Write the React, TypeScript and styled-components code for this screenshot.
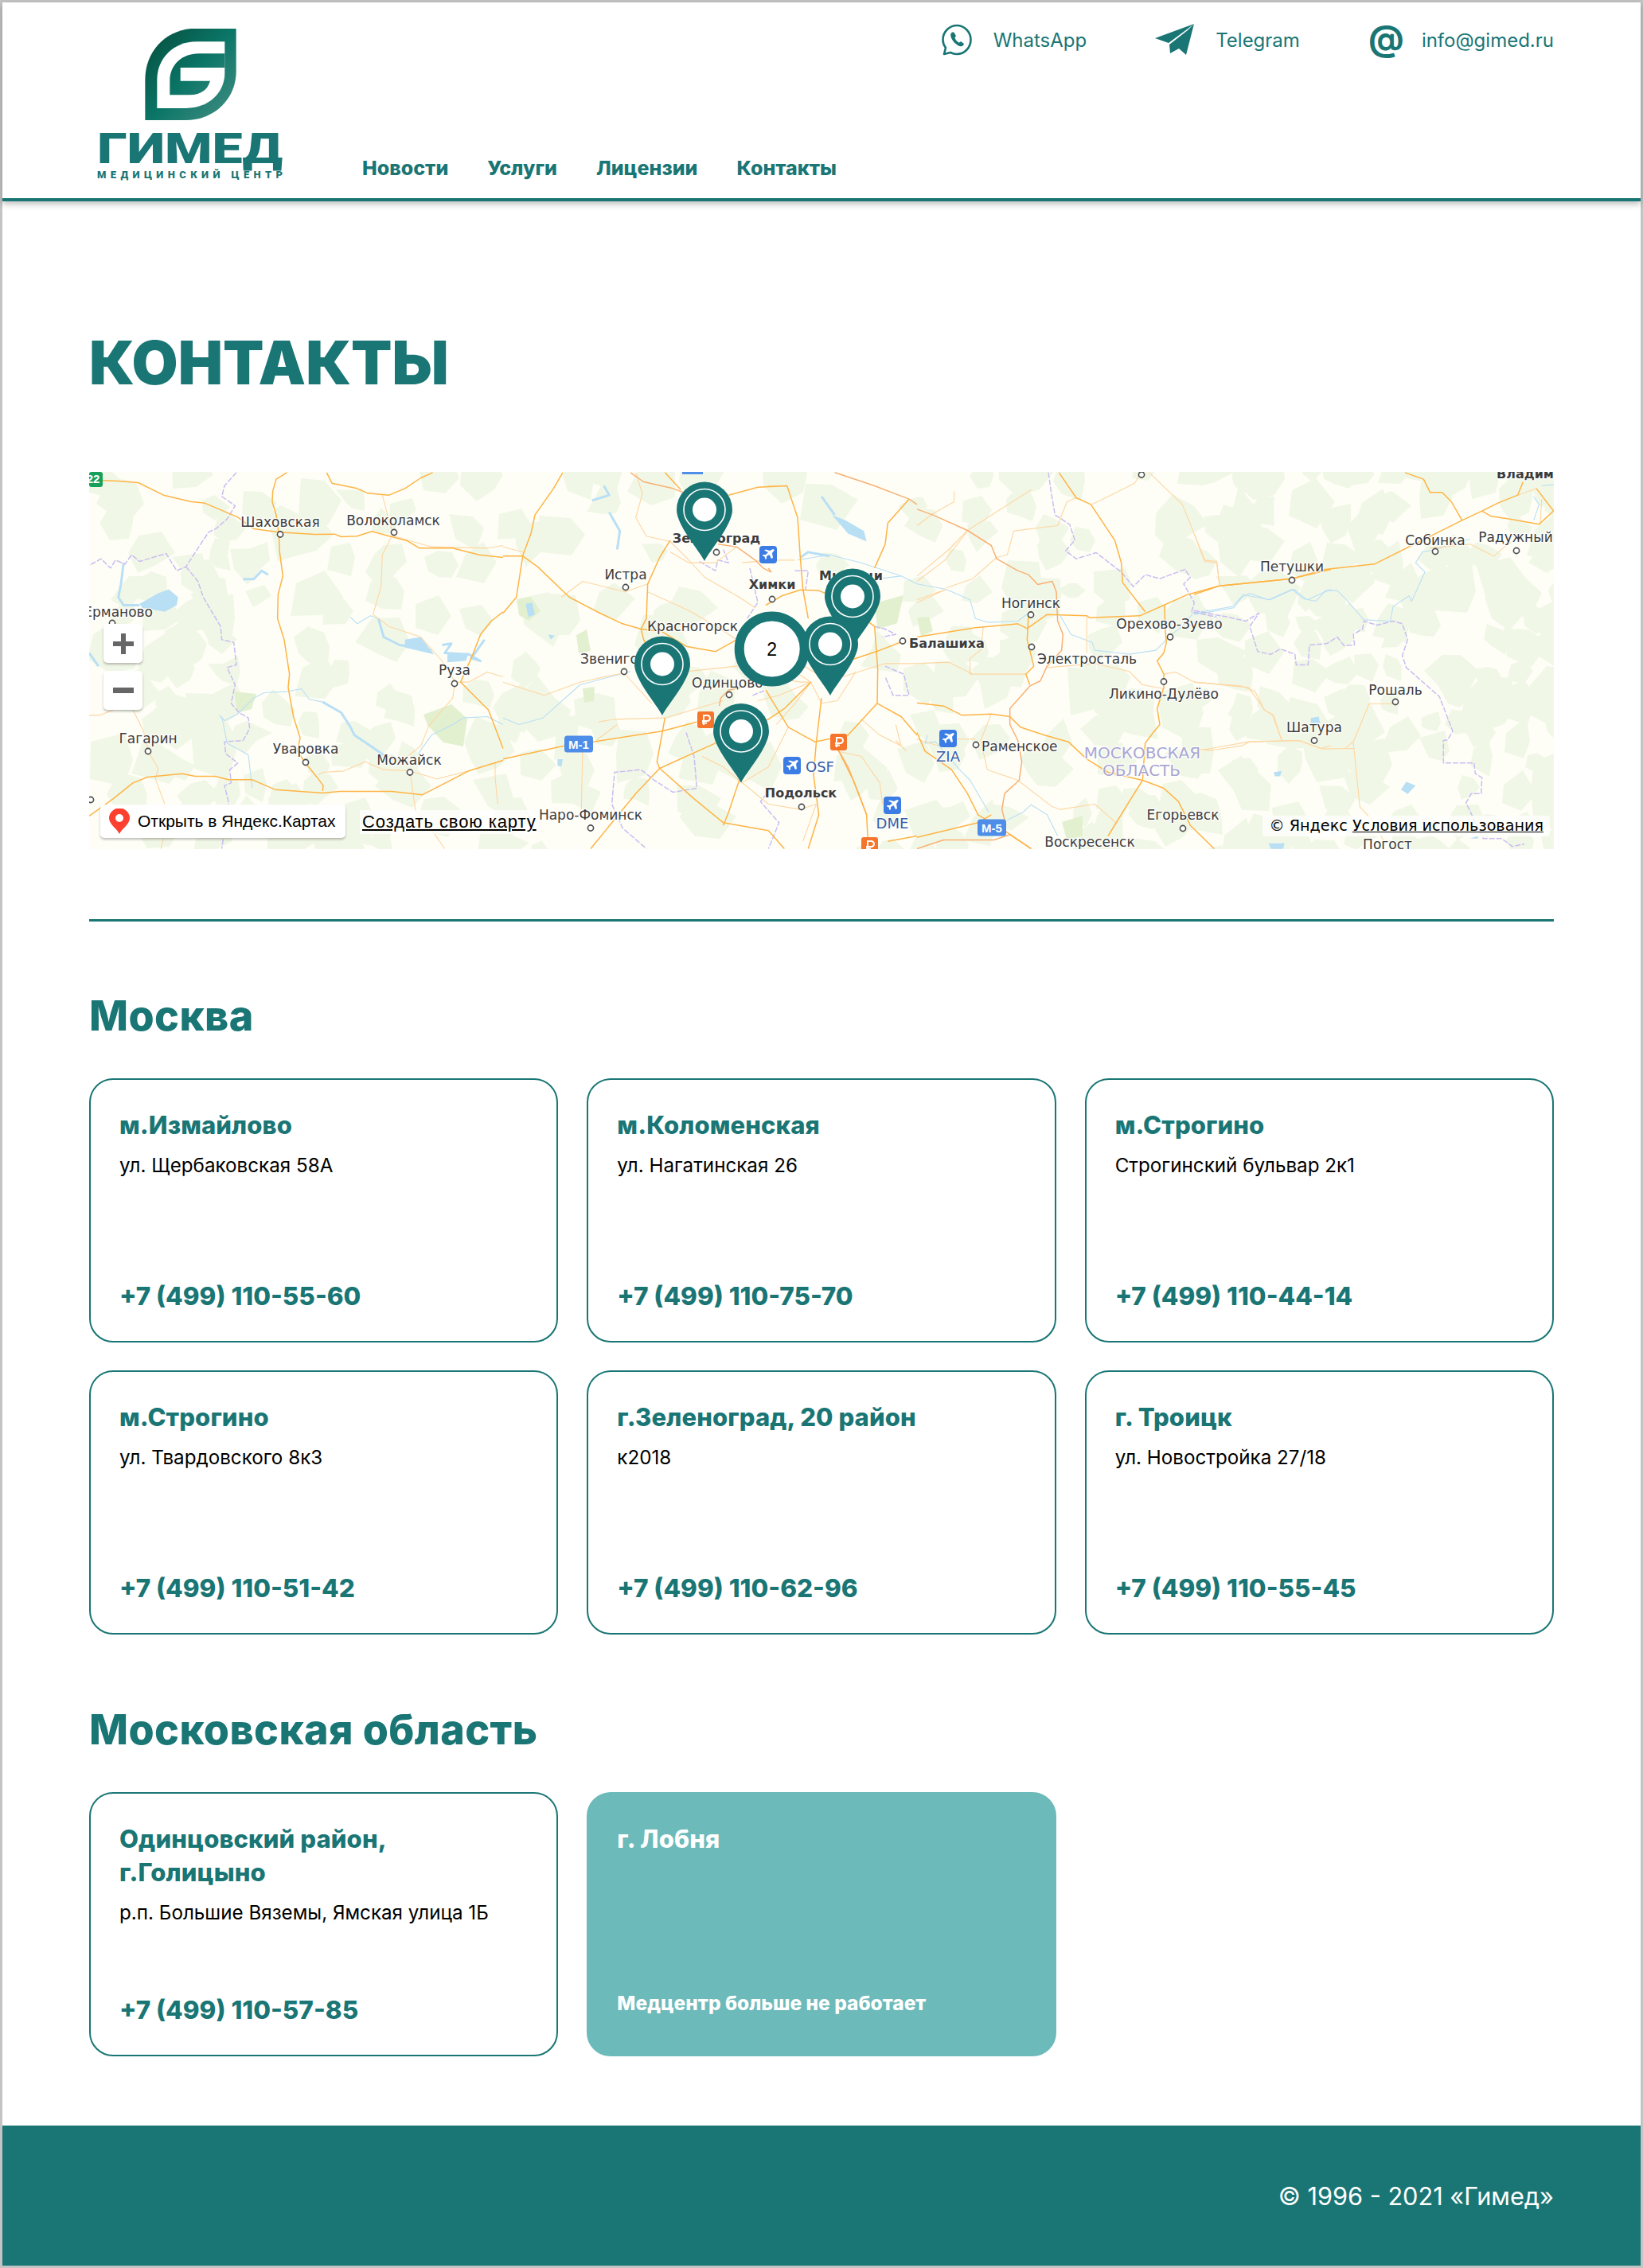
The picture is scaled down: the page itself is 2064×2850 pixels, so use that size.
import React from 'react';
import styled, { createGlobalStyle } from 'styled-components';

const TEAL = '#197675';

const GlobalStyle = createGlobalStyle`
  html, body { margin: 0; padding: 0; background: #fff; }
  * { box-sizing: border-box; }
  body { font-family: Inter, "Liberation Sans", sans-serif; color: #000; }
`;

const Page = styled.div`
  height: 2850px;
  border: 3px solid #c4c4c4;
  display: flex;
  flex-direction: column;
  background: #fff;
`;

const Header = styled.header`
  height: 250px;
  flex: none;
  border-bottom: 4px solid ${TEAL};
  box-shadow: 0 3px 8px rgba(0, 0, 0, 0.28);
  padding: 33px 109px 0 119px;
  display: flex;
  align-items: flex-start;
  position: relative;
`;

const LogoBox = styled.a`
  display: block;
  width: 234px;
  height: 192px;
  flex: none;
`;

const Nav = styled.nav`
  display: flex;
  gap: 49px;
  margin: 158px 0 0 99px;
`;

const NavLink = styled.a`
  font-size: 25px;
  line-height: 34px;
  font-weight: 800;
  color: ${TEAL};
  white-space: nowrap;
`;

const Contacts = styled.div`
  margin-left: auto;
  margin-top: -6px;
  display: flex;
  gap: 86px;
  height: 40px;
`;

const ContactItem = styled.a`
  display: flex;
  align-items: center;
  gap: 27px;
  font-size: 24px;
  color: ${TEAL};
  white-space: nowrap;
`;

const AtSign = styled.span`
  font-size: 44px;
  line-height: 40px;
  font-weight: 700;
  width: 40px;
  text-align: center;
  margin-top: -5px;
`;

const Main = styled.main`
  flex: 1;
  padding: 0 109px;
  display: flex;
  flex-direction: column;
`;

const Title = styled.h1`
  margin: 158px 0 0;
  font-size: 75px;
  line-height: 90px;
  font-weight: 900;
  color: ${TEAL};
`;

const MapFrame = styled.div`
  position: relative;
  height: 474px;
  margin-top: 92px;
  overflow: hidden;
  background: #fefef7;
`;

const MapSvg = styled.svg`
  display: block;
  width: 100%;
  height: 100%;
`;

const ZoomButton = styled.button<{ $top: number }>`
  position: absolute;
  left: 18px;
  top: ${p => p.$top}px;
  width: 49px;
  height: 49px;
  padding: 0;
  border: 0;
  border-radius: 5px;
  background: #fff;
  box-shadow: 0 2px 3px rgba(0, 0, 0, 0.25);
  display: flex;
  align-items: center;
  justify-content: center;
`;

const OpenButton = styled.a`
  position: absolute;
  left: 14px;
  top: 418px;
  width: 308px;
  height: 42px;
  border-radius: 5px;
  background: #fff;
  box-shadow: 0 2px 3px rgba(0, 0, 0, 0.25);
  display: flex;
  align-items: center;
  gap: 10px;
  padding-left: 11px;
  font-family: "Liberation Sans", sans-serif;
  font-size: 21px;
  color: #000;
  white-space: nowrap;
`;

const CreateLink = styled.a`
  position: absolute;
  left: 340px;
  top: 425px;
  height: 30px;
  padding: 0 3px;
  background: rgba(255, 255, 255, 0.75);
  font-family: "Liberation Sans", sans-serif;
  font-size: 22px;
  line-height: 30px;
  letter-spacing: 0.9px;
  color: #000;
  text-decoration: underline;
  white-space: nowrap;
`;

const Copyright = styled.div`
  position: absolute;
  right: 5px;
  top: 432px;
  height: 26px;
  padding: 0 8px;
  border-radius: 4px;
  background: rgba(255, 255, 255, 0.75);
  font-family: "DejaVu Sans", sans-serif;
  font-size: 19.2px;
  line-height: 26px;
  color: #000;
  white-space: nowrap;

  span {
    text-decoration: underline;
  }
`;

const Divider = styled.hr`
  margin: 88px 0 0;
  border: 0;
  border-top: 3px solid ${TEAL};
`;

const RegionTitle = styled.h2<{ $top: number }>`
  margin: ${p => p.$top}px 0 0;
  font-size: 52px;
  line-height: 60px;
  font-weight: 800;
  letter-spacing: 0.4px;
  color: ${TEAL};
`;

const CardGrid = styled.div`
  margin-top: 48px;
  display: grid;
  grid-template-columns: repeat(3, 1fr);
  grid-auto-rows: 332px;
  column-gap: 36px;
  row-gap: 35px;
`;

const Card = styled.article<{ $closed?: boolean }>`
  border-radius: 30px;
  border: 2px solid ${p => (p.$closed ? '#6cbaba' : TEAL)};
  background: ${p => (p.$closed ? '#6cbaba' : '#fff')};
  padding: 36px 36px 34px;
  display: flex;
  flex-direction: column;
`;

const CardTitle = styled.h3<{ $closed?: boolean }>`
  margin: 0;
  font-size: 31px;
  line-height: 42px;
  font-weight: 800;
  letter-spacing: 0.1px;
  color: ${p => (p.$closed ? '#fff' : TEAL)};
`;

const Address = styled.p`
  margin: 13px 0 0;
  font-size: 24.2px;
  line-height: 34px;
  color: #000;
`;

const Phone = styled.a`
  margin-top: auto;
  font-size: 31.5px;
  line-height: 44px;
  font-weight: 800;
  color: ${TEAL};
`;

const ClosedNote = styled.p`
  margin: auto 0 0;
  padding-bottom: 14px;
  font-size: 24.5px;
  line-height: 34px;
  font-weight: 800;
  color: #fff;
`;

const Footer = styled.footer`
  height: 176px;
  flex: none;
  background: #197675;
  padding: 0 109px;
  display: flex;
  align-items: center;
  justify-content: flex-end;
  font-size: 30.7px;
  color: #fff;
`;

// map drawing parts
const Road = styled.polyline<{ $kind: 'main' | 'minor' | 'salmon' }>`
  fill: none;
  stroke: ${p => (p.$kind === 'main' ? '#feb445' : p.$kind === 'salmon' ? '#f9b073' : '#fed6a2')};
  stroke-width: ${p => (p.$kind === 'minor' ? 1.1 : 1.5)};
  stroke-linejoin: round;
  vector-effect: non-scaling-stroke;
`;

const River = styled.polyline<{ $thick?: boolean }>`
  fill: none;
  stroke: #b9dff5;
  stroke-width: ${p => (p.$thick ? 3 : 1.1)};
  stroke-linejoin: round;
  vector-effect: non-scaling-stroke;
`;

const Lake = styled.polygon`
  fill: #b9dff5;
`;

const Border = styled.polyline`
  fill: none;
  stroke: #c9bdf2;
  stroke-width: 1.5;
  stroke-dasharray: 7 2;
  stroke-linejoin: round;
  vector-effect: non-scaling-stroke;
`;

const Place = styled.text<{ $bold?: boolean; $tone?: string; $size?: number }>`
  font-family: "DejaVu Sans", sans-serif;
  font-size: ${p => p.$size ?? (p.$bold ? 16 : 17)}px;
  font-weight: ${p => (p.$bold ? 700 : 400)};
  fill: ${p => p.$tone ?? '#3c3c3c'};
  stroke: rgba(255, 255, 255, 0.85);
  stroke-width: 2.5px;
  paint-order: stroke;
`;

const Dot = styled.circle`
  fill: #fff;
  stroke: #4c4c4c;
  stroke-width: 1.6;
`;

const SignText = styled.text`
  font-family: "Liberation Sans", sans-serif;
  font-size: 15px;
  font-weight: 700;
  fill: #fff;
  text-anchor: middle;
`;

const ClusterLabel = styled.text`
  font-family: "Liberation Sans", sans-serif;
  font-size: 23px;
  fill: #000;
  text-anchor: middle;
`;

type Crop = {
  x: number;
  main?: string[];
  salmon?: string[];
  minor?: string[];
  rivers?: string[];
  thick?: string[];
  lakes?: string[];
  borders?: string[];
};

// road traces, written in the coordinates of a 3x crop of each part of the map
const crops: Crop[] = [
  {
    x: 0,
    main: [
      '50,40 110,42 185,48 280,95 385,120 435,125 560,178 620,222 715,235 850,243 925,242 950,252 1010,250 1065,232 1140,252 1200,268 1245,295 1370,295 1470,320 1560,330',
      '745,10 705,35 692,80 690,120 705,170 715,240 718,310 730,400 712,470 710,560 735,640 755,770 750,820 770,930 795,1010 785,1060 815,1105 860,1160 882,1190 880,1210',
      '0,1305 90,1240 165,1180 220,1158 350,1145 400,1155 475,1155 525,1168 615,1168 700,1205 880,1218 945,1212 1140,1212 1255,1225 1430,1135 1560,1095',
      '895,10 915,50 1010,70 1050,88 1130,95 1190,70 1250,30 1295,10',
      '1560,535 1515,570 1475,620 1440,710 1400,800 1505,905 1560,1050',
    ],
    minor: [
      '1105,95 1125,170 1145,240 1105,320 1100,440 1070,545 1130,590 1250,630 1330,720 1380,800 1370,860 1280,965 1250,1040 1200,1080',
      '1150,250 1290,290 1500,295 1560,285',
      '165,905 205,985 222,1060 260,1125 250,1165 285,1260',
      '0,925 40,925 90,905',
      '865,1150 880,1140 960,1135 1040,1100 1110,1130 1210,1135 1310,1165 1430,1135',
      '1210,1140 1230,1285 1300,1370 1340,1428',
      '1390,800 1430,800 1500,762 1560,780',
      '1530,1100 1530,1160 1540,1260',
      '280,1390 270,1428',
    ],
    rivers: [
      '490,925 510,945 560,920 620,860 660,840 750,835 800,825 830,865 880,875',
      '500,930 520,1030 600,1075 615,1200',
      '1240,1070 1290,1000 1370,960 1410,935 1500,930 1560,960',
      '985,555 1010,580 1060,550 1090,560',
    ],
    thick: [
      '0,690 35,740',
      '130,350 120,430 110,480 130,510 190,510',
      '580,412 620,412 650,380 675,395',
      '1090,560 1110,630 1170,660 1290,680',
      '1330,660 1365,655 1340,690 1430,695 1475,720 1440,710 1490,640',
      '880,875 950,915 985,970 1000,1000 1060,1040 1110,1075',
    ],
    lakes: [
      '190,505 260,465 300,450 335,480 330,510 285,535 200,520',
      '1190,640 1250,630 1300,695 1190,670',
      '1350,695 1430,690 1420,720 1350,725',
    ],
    borders: [
      '555,10 510,60 500,100 550,135 520,185 480,220 450,235 420,280 365,365 330,380 290,315 190,345 160,320 135,355 100,340 80,370 45,335 0,360',
      '365,365 410,420 430,480 495,590 500,640 545,650 555,735 520,745 550,810 535,880 565,915 600,935 605,975 580,1020 510,1025 515,1070 560,1105 530,1130 535,1180 510,1190 525,1250 500,1428',
    ],
  },
  {
    x: 520,
    main: [
      '225,10 190,70 120,170 105,240 75,320 50,480 0,540',
      '0,325 75,325 130,365 250,480 365,540 450,580 520,600 600,610 690,665 800,685 880,640',
      '630,265 590,330 545,430 540,560 520,600 530,640 545,670',
      '610,10 670,75',
      '850,95 960,65 1070,60 1110,180 1120,330 1130,450 1150,560',
      '0,1090 230,1040 340,1025 600,985 730,950',
      '610,935 600,990 580,1100 590,1125 720,1240 830,1330 1000,1360 1060,1428',
      '590,1125 800,1030 1000,940 1060,900 1160,800',
      '590,1125 500,1220 330,1428',
      '990,510 1050,475 1120,452 1190,455 1250,480 1400,590 1412,750 1410,880 1300,1000 1175,1025 1075,970 990,830',
      '1200,860 1180,1030 1170,1150 1190,1300 1150,1428',
      '1260,1050 1320,1170 1370,1300 1375,1400',
      '1410,880 1500,930 1560,1000',
      '1300,720 1420,680 1510,645',
      '1530,110 1450,200 1440,280 1400,370',
      '890,1170 850,1290 830,1340',
      '1560,1380 1450,1400',
    ],
    salmon: [
      '480,10 530,45 640,70 720,100',
      '1250,10 1400,60 1530,110 1560,130',
      '1000,370 1010,385 980,370 950,340 880,290 810,280',
      '815,890 820,860 850,830 900,820',
      '1260,1050 1300,1120 1340,1220 1370,1300',
    ],
    minor: [
      '0,290 75,310',
      '500,10 525,90 500,180 540,250 630,270 700,340 760,405 890,480 950,520',
      '630,310 700,350 800,350 880,290',
      '0,800 155,850 290,800 455,765 560,880',
      '545,430 460,460 300,420 220,480',
      '545,460 700,530 820,600 880,640',
      '360,950 420,940 610,935 830,870',
      '300,1040 295,1280',
      '690,760 880,740 1000,720',
      '1000,60 1070,60',
      '1100,760 1160,800 1100,880 1030,960',
      '1160,800 1200,880 1260,870 1330,760',
      '1280,780 1440,730 1560,730',
      '1100,340 1000,340 900,350',
      '1075,970 1000,1120 900,1180',
      '750,1080 830,1120 890,1170 1000,1260 1120,1280',
      '1260,1060 1350,1080 1420,1180 1430,1260',
      '1120,1280 1180,1260 1130,1400',
      '1060,790 1120,800 1160,800 1040,850 960,870',
      '1200,780 1120,730 1040,760',
      '1350,940 1420,1000 1500,1040 1480,960',
      '1520,1060 1480,1020',
      '350,1020 430,960',
    ],
    rivers: [
      '0,935 60,960 150,935 290,810 480,760',
      '1110,340 1230,320 1350,350 1500,400 1560,430',
      '1420,410 1500,400',
    ],
    thick: [
      '335,115 400,95 380,60',
      '400,160 440,230 430,300',
      '1200,100 1250,170',
      '1120,330 1150,310 1230,325',
    ],
    lakes: [
      '1240,170 1290,190 1360,230 1370,270 1300,240',
      '85,505 110,500 120,545 95,555',
      '170,620 195,625 180,640',
      '205,1090 225,1090 220,1118 205,1115',
    ],
    borders: [
      '740,345 800,380 810,340 850,350 830,300',
      '930,370 960,500 920,560',
      '1100,380 1150,380 1140,450',
      '1400,590 1440,600 1480,620 1430,630',
      '1440,740 1510,770 1530,850 1470,850 1440,780',
      '690,990 720,1080 730,1200 640,1215 570,1170 520,1130 420,1140 410,1260 450,1350 540,1428',
      '940,850 990,830',
      '1010,1200 970,1250 1040,1330 1000,1428',
    ],
  },
  {
    x: 1040,
    main: [
      '0,630 220,595 380,580 415,598 490,545 640,550 650,557 840,550 930,510 1020,470 1140,437 1410,410 1560,375',
      '535,10 600,105 655,130 745,265 770,350 775,425 860,535',
      '933,510 935,600 940,650 930,690 905,720 930,770 930,820 905,900 915,960 890,990 860,1030 850,1170 800,1250 720,1380',
      '0,878 100,890 170,925 280,920 350,930 390,970 480,1000 570,1025 640,1090 720,1140 850,1170 930,1200 985,1250 1030,1340 1120,1428',
      '0,990 30,1060 130,1130 190,1220 230,1300 330,1360 430,1428',
      '420,550 415,640 440,740 410,770 425,810',
      '0,1385 230,1330 280,1300',
    ],
    salmon: [
      '0,148 60,170 190,228 280,285 300,335 380,380 420,395 455,432 510,420 525,460 530,570 550,620 545,680 490,740 465,795 425,815 350,900 350,960 380,1020 395,1100 385,1170 330,1220 320,1280 335,1340',
      '0,1428 100,1395 290,1395 350,1375 430,1428',
    ],
    minor: [
      '430,75 195,225 105,340 0,420',
      '140,80 140,120 60,165 0,210',
      '190,228 120,300 0,400',
      '110,445 210,410 300,330 340,320 365,230 530,210 565,120 600,105',
      '660,130 710,105 820,50 845,10',
      '875,10 1000,130 1085,340 1130,345 1140,437',
      '250,590 240,680 200,710 200,770 410,770',
      '0,730 120,725 210,770',
      '490,745 670,730 800,760 850,810 930,825',
      '930,770 975,762 1045,800 1250,820 1310,905 1340,925 1375,1020',
      '1080,1055 1250,1025 1440,1020 1520,1050 1560,1040',
      '640,555 640,690',
      '220,1015 150,1015',
      '280,920 240,1020 265,1130 380,1170 510,1270 540,1280 670,1260 750,1330',
      '0,1015 80,1040',
      '0,490 110,450 0,500',
    ],
    rivers: [
      '0,430 110,450 200,490 220,560 270,575 380,570 420,540',
      '540,550 580,620 660,650 670,680 760,690 800,695 900,680 960,620 1000,590 1040,540 1190,515 1230,470 1330,490 1420,450 1470,490 1560,450',
      '40,1000 30,1030 70,1025 100,1060 160,1130 200,1170 270,1290',
      '340,1320 400,1290 430,1262 490,1300 530,1380',
    ],
    lakes: ['1330,1410 1385,1408 1380,1428 1335,1428'],
    borders: [
      '495,10 505,80 520,170 575,205 595,265 560,305 600,335 675,312 770,385 815,440 860,395 915,410 1010,375 1030,405 1005,430 1045,500 1035,535 1130,555',
    ],
  },
  {
    x: 1388,
    main: [
      '0,470 95,437 370,410 495,375 680,355 890,250 1010,190 1085,155 1145,125 1220,95 1240,45',
      '1085,155 1120,175 1190,185 1300,205 1355,155',
      '795,10 865,35 890,85 935,85 970,120 1010,190',
      '1290,70 1355,155',
    ],
    minor: [
      '1220,95 1290,70',
      '1310,110 1305,205',
      '0,240 40,345 85,350 97,437',
      '0,800 180,815 230,835 265,905 300,925 330,1020',
      '0,1050 60,1058 180,1040 210,1025 395,1020 485,1052 600,1050',
      '600,1025 660,882 760,882',
      '600,1025 570,1048',
      '600,1025 625,1270 680,1330 715,1400',
      '890,295 1040,280 1130,325 1170,290 1200,270',
    ],
    rivers: [
      '0,545 150,520 180,480 210,465 280,490 370,450 410,485 460,495 495,455 540,455 575,490 640,565 740,570 750,515 810,475 820,495 850,430 870,385 835,350 860,310 910,300 1040,260',
      '1280,100 1300,130 1280,190',
      '1310,60 1355,55',
    ],
    lakes: [
      '440,935 470,930 475,955 440,955',
      '300,1140 330,1135 325,1155 305,1155',
      '780,1205 800,1175 835,1190 805,1222',
      '280,1408 340,1408 335,1428 290,1428',
      '1040,1390 1070,1380 1070,1390',
    ],
    borders: [
      '0,530 75,545 130,555 195,570 245,540 210,590 240,685 290,695 325,675 380,695 385,735 430,735 435,660 500,655 540,630 565,662 605,660 600,620 635,600 640,570 690,585 750,570 785,580 805,640 785,700 800,745 925,855 975,985 955,1018 940,1020 940,1105 1055,1105 1060,1145 1085,1160 1082,1220 1045,1220 1025,1255 1090,1390 1160,1390 1200,1420 1245,1410',
    ],
  },
];

type Label = { t: string; x: number; y: number; bold?: boolean; start?: boolean; end?: boolean };

const labels: Label[] = [
  { t: 'Шаховская', x: 240, y: 69 },
  { t: 'Волоколамск', x: 382, y: 67 },
  { t: 'Ерманово', x: 80, y: 182, end: true },
  { t: 'Руза', x: 459, y: 255 },
  { t: 'Гагарин', x: 74, y: 341 },
  { t: 'Уваровка', x: 272, y: 354 },
  { t: 'Можайск', x: 402, y: 368 },
  { t: 'Зеленоград', x: 788, y: 89, bold: true },
  { t: 'Истра', x: 674, y: 135 },
  { t: 'Химки', x: 858, y: 147, bold: true },
  { t: 'Мытищи', x: 957, y: 136, bold: true },
  { t: 'Красногорск', x: 758, y: 200 },
  { t: 'Звенигород', x: 617, y: 241, start: true },
  { t: 'Одинцово', x: 757, y: 271, start: true },
  { t: 'Наро-Фоминск', x: 630, y: 437 },
  { t: 'Подольск', x: 894, y: 409, bold: true },
  { t: 'Балашиха', x: 1030, y: 221, start: true, bold: true },
  { t: 'Ногинск', x: 1183, y: 171 },
  { t: 'Электросталь', x: 1191, y: 241, start: true },
  { t: 'Орехово-Зуево', x: 1357, y: 197 },
  { t: 'Ликино-Дулёво', x: 1350, y: 285 },
  { t: 'Раменское', x: 1121, y: 351, start: true },
  { t: 'Егорьевск', x: 1374, y: 437 },
  { t: 'Воскресенск', x: 1257, y: 471 },
  { t: 'Петушки', x: 1511, y: 125 },
  { t: 'Собинка', x: 1691, y: 92 },
  { t: 'Радужный', x: 1792, y: 88 },
  { t: 'Владимир', x: 1768, y: 8, start: true, bold: true },
  { t: 'Рошаль', x: 1641, y: 280 },
  { t: 'Шатура', x: 1539, y: 327 },
  { t: 'Погост', x: 1631, y: 474 },
];

const dots: [number, number][] = [
  [240, 78.5], [383, 76], [459, 266], [74, 351], [272, 365], [403, 377.5], [2, 412], [29, 190],
  [788, 101], [674, 145], [858, 160], [672, 251], [804, 280], [630, 447.5], [895, 421],
  [1022, 212.5], [1183, 179.5], [1184, 220], [1358, 207.5], [1350, 263.5], [1114, 343],
  [1374, 448], [1322, 3.5], [1511, 136], [1691, 100], [1793, 99], [1641, 289], [1539, 337.5],
];

function mulberry(seed: number) {
  return () => {
    seed = (seed + 0x6d2b79f5) | 0;
    let t = Math.imul(seed ^ (seed >>> 15), 1 | seed);
    t = (t + Math.imul(t ^ (t >>> 7), 61 | t)) ^ t;
    return ((t ^ (t >>> 14)) >>> 0) / 4294967296;
  };
}

function forestChance(x: number, y: number) {
  if (x > 770 && x < 1040 && y > 120 && y < 340) return 0.1;
  if (x > 1400) return 0.8;
  if (x > 1040) return 0.55;
  if (x > 40 && x < 180 && y > 110 && y < 400) return 0.95;
  return 0.36;
}

function buildForest() {
  const rand = mulberry(4127);
  const shapes: string[] = [];
  for (let gy = -10; gy < 490; gy += 36) {
    for (let gx = -10; gx < 1860; gx += 40) {
      const cx = gx + rand() * 26;
      const cy = gy + rand() * 26;
      const hit = rand();
      const radius = 17 + rand() * 20;
      if (hit > forestChance(cx, cy)) continue;
      const pts: string[] = [];
      const n = 5 + Math.floor(rand() * 3);
      for (let i = 0; i < n; i++) {
        const a = (i / n) * Math.PI * 2;
        const r = radius * (0.5 + rand() * 0.75);
        pts.push(`${Math.round(cx + Math.cos(a) * r)},${Math.round(cy + Math.sin(a) * r)}`);
      }
      shapes.push(pts.join(' '));
    }
  }
  return shapes;
}

const forest = buildForest();

const Forest = styled.polygon<{ $deep?: boolean }>`
  fill: ${p => (p.$deep ? '#e2f0d0' : '#f1f7e6')};
`;

function Pin({ x, y }: { x: number; y: number }) {
  return (
    <g transform={`translate(${x} ${y})`}>
      <path d="M0 64.5 C-6 52 -35 20 -35 0 A35 35 0 0 1 35 0 C35 20 6 52 0 64.5 Z" fill={TEAL} />
      <circle r="26" fill="none" stroke="#fff" strokeWidth="1.6" />
      <circle r="15" fill="#fff" />
    </g>
  );
}

function Plane({ x, y }: { x: number; y: number }) {
  return (
    <g transform={`translate(${x - 11} ${y - 11})`}>
      <rect width="22" height="22" rx="4" fill="#3b7de4" />
      <path d="M17 4 L19 5 L16 9 L17 15 L15 16 L12.5 11 L9 13 L9 16 L7.5 17 L6.5 13.5 L3.5 12 L5 11 L8 11 L11 8 L6 5.5 L8 4.5 L13 6 Z" fill="#fff" />
    </g>
  );
}

function Ruble({ x, y }: { x: number; y: number }) {
  return (
    <g transform={`translate(${x - 10} ${y - 10})`}>
      <rect width="21" height="21" rx="3" fill="#f6752c" />
      <path d="M8 17 V5 H12.5 A3.4 3.4 0 0 1 12.5 12 H6 M6 14.5 H12" fill="none" stroke="#fff" strokeWidth="2" />
    </g>
  );
}

function RoadSign({ x, y, text }: { x: number; y: number; text: string }) {
  return (
    <g transform={`translate(${x} ${y})`}>
      <rect x="-18" y="-10.5" width="36" height="21" rx="3.5" fill="#4f8ee8" />
      <SignText y="5.5">{text}</SignText>
    </g>
  );
}

function MapDrawing() {
  return (
    <MapSvg viewBox="0 0 1840 474">
      <rect width="1840" height="474" fill="#fefef7" />
      {forest.map((pts, i) => (
        <Forest key={i} points={pts} />
      ))}
      <Forest $deep points="182,276 210,279 204,298 186,303" />
      <Forest $deep points="420,305 455,292 475,310 470,345 445,340 425,318" />
      <Forest $deep points="537,160 555,157 567,175 552,187 540,180" />
      <Forest $deep points="612,205 625,198 630,225 615,228" />
      <Forest $deep points="620,272 635,270 634,288 622,290" />
      <Forest $deep points="987,165 1023,155 1015,190 990,198" />
      <Forest $deep points="1040,183 1055,182 1060,200 1045,207" />
      <Forest $deep points="1222,440 1248,432 1248,458 1228,462" />
      {crops.map(crop => (
        <g key={crop.x} transform={`translate(${crop.x} -2.5) scale(0.33333)`}>
          {crop.lakes?.map(p => <Lake key={p} points={p} />)}
          {crop.rivers?.map(p => <River key={p} points={p} />)}
          {crop.thick?.map(p => <River key={p} $thick points={p} />)}
          {crop.borders?.map(p => <Border key={p} points={p} />)}
          {crop.minor?.map(p => <Road key={p} $kind="minor" points={p} />)}
          {crop.salmon?.map(p => <Road key={p} $kind="salmon" points={p} />)}
          {crop.main?.map(p => <Road key={p} $kind="main" points={p} />)}
        </g>
      ))}
      <rect x="0" y="0" width="17" height="19" rx="3" fill="#17a05c" />
      <SignText x="5" y="14">22</SignText>
      <rect x="745" y="0" width="26" height="3" fill="#4f8ee8" />
      <RoadSign x={615} y={342} text="М-1" />
      <RoadSign x={1134} y={447} text="М-5" />
      <Plane x={853} y={104} />
      <Plane x={883} y={369} />
      <Plane x={1009} y={419} />
      <Plane x={1079} y={335} />
      <Ruble x={774} y={311} />
      <Ruble x={941} y={339} />
      <Ruble x={980} y={469} />
      {dots.map(([x, y]) => (
        <Dot key={`${x}-${y}`} cx={x} cy={y} r="3.6" />
      ))}
      {labels.map(l => (
        <Place key={l.t} x={l.x} y={l.y} $bold={l.bold} textAnchor={l.start ? 'start' : l.end ? 'end' : 'middle'}>
          {l.t}
        </Place>
      ))}
      <Place x={900} y={377} $tone="#3a5fa8" $size={18}>OSF</Place>
      <Place x={1009} y={448} $tone="#3a5fa8" $size={18} textAnchor="middle">DME</Place>
      <Place x={1079} y={364} $tone="#3a5fa8" $size={18} textAnchor="middle">ZIA</Place>
      <Place x={1323} y={360} $tone="#aaa6d2" $size={20} textAnchor="middle">МОСКОВСКАЯ</Place>
      <Place x={1322} y={382} $tone="#aaa6d2" $size={20} textAnchor="middle">ОБЛАСТЬ</Place>
      <Pin x={773} y={47.5} />
      <Pin x={720} y={241.5} />
      <Pin x={819} y={326} />
      <g transform="translate(857.7 222.5)">
        <circle r="41" fill="#fff" stroke={TEAL} strokeWidth="12" />
        <ClusterLabel y="8">2</ClusterLabel>
      </g>
      <Pin x={959} y={156.5} />
      <Pin x={931} y={216.5} />
    </MapSvg>
  );
}

const LogoName = styled.text`
  font-family: Roboto, sans-serif;
  font-size: 54px;
  font-weight: 900;
  fill: ${TEAL};
`;

const LogoSub = styled.text`
  font-family: Roboto, sans-serif;
  font-size: 13px;
  font-weight: 900;
  fill: ${TEAL};
`;

function Logo() {
  return (
    <svg width="234" height="192" viewBox="0 0 234 192">
      <defs>
        <linearGradient id="leaf" gradientUnits="userSpaceOnUse" x1="240" y1="60" x2="560" y2="350">
          <stop offset="0" stopColor="#06503f" />
          <stop offset="0.5" stopColor="#0a7566" />
          <stop offset="1" stopColor="#3f8c82" />
        </linearGradient>
      </defs>
      <g transform="translate(-12 -16) scale(0.33333)">
        <path fill="url(#leaf)" d="M560 47 H410 C300 47 217 130 217 240 V393 H370 C480 393 560 310 560 210 Z" />
        <path fill="#fff" d="M517 97 H410 C325 97 262 160 262 240 V348 H370 C455 348 517 290 517 215 Z" />
        <path fill="url(#leaf)" d="M517 142 H420 C355 142 310 185 310 245 V298 H385 C425 298 452 280 462 245 H350 V195 H517 Z" />
      </g>
      <LogoName x="0" y="169" textLength="233" lengthAdjust="spacingAndGlyphs">ГИМЕД</LogoName>
      <LogoSub x="0" y="188" textLength="233" lengthAdjust="spacing">МЕДИЦИНСКИЙ ЦЕНТР</LogoSub>
    </svg>
  );
}

function WhatsAppIcon() {
  return (
    <svg width="38" height="40" viewBox="0 0 38 40">
      <path
        d="M3 38 L5 30 C2.500 26.800 1.500 23.500 1.500 20 C1.500 10 9.500 2 19 2 C28.500 2 36.500 10 36.500 20 C36.500 30 28.500 38 19 38 C16 38 13.500 37.300 11 36 Z"
        fill="none"
        stroke={TEAL}
        strokeWidth="2.6"
        strokeLinejoin="round"
      />
      <path
        d="M12.500 11 C11 12 10.800 14.500 11.800 17 C13.500 21.500 17.500 26 22.500 28 C25 29 27.500 27.500 28 25 L24 22 C23.200 22.600 22.500 23.600 21.600 23.400 C19 22 17.500 20 16.600 17.700 C16.500 16.800 17.500 16 18 15.300 L15.300 10.600 C14.300 10.400 13.300 10.500 12.500 11 Z"
        fill={TEAL}
      />
    </svg>
  );
}

function TelegramIcon() {
  return (
    <svg width="49" height="40" viewBox="0 0 49 40">
      <polygon fill={TEAL} points="49,0 0,18 17,24 40,7" />
      <polygon fill={TEAL} points="49,0 39,39 30,31 19,37 18,26 41,8" />
    </svg>
  );
}

const moscow = [
  { title: 'м.Измайлово', address: 'ул. Щербаковская 58А', phone: '+7 (499) 110-55-60' },
  { title: 'м.Коломенская', address: 'ул. Нагатинская 26', phone: '+7 (499) 110-75-70' },
  { title: 'м.Строгино', address: 'Строгинский бульвар 2к1', phone: '+7 (499) 110-44-14' },
  { title: 'м.Строгино', address: 'ул. Твардовского 8к3', phone: '+7 (499) 110-51-42' },
  { title: 'г.Зеленоград, 20 район', address: 'к2018', phone: '+7 (499) 110-62-96' },
  { title: 'г. Троицк', address: 'ул. Новостройка 27/18', phone: '+7 (499) 110-55-45' },
];

function Office({ title, address, phone }: { title: string; address: string; phone: string }) {
  return (
    <Card>
      <CardTitle>{title}</CardTitle>
      <Address>{address}</Address>
      <Phone>{phone}</Phone>
    </Card>
  );
}

export default function App() {
  return (
    <>
      <GlobalStyle />
      <Page>
        <Header>
          <LogoBox>
            <Logo />
          </LogoBox>
          <Nav>
            <NavLink>Новости</NavLink>
            <NavLink>Услуги</NavLink>
            <NavLink>Лицензии</NavLink>
            <NavLink>Контакты</NavLink>
          </Nav>
          <Contacts>
            <ContactItem>
              <WhatsAppIcon />
              WhatsApp
            </ContactItem>
            <ContactItem>
              <TelegramIcon />
              Telegram
            </ContactItem>
            <ContactItem>
              <AtSign>@</AtSign>
              info@gimed.ru
            </ContactItem>
          </Contacts>
        </Header>
        <Main>
          <Title>КОНТАКТЫ</Title>
          <MapFrame>
            <MapDrawing />
            <ZoomButton $top={191}>
              <svg width="26" height="26" viewBox="0 0 26 26">
                <path d="M10 0 H16 V10 H26 V16 H16 V26 H10 V16 H0 V10 H10 Z" fill="#666" />
              </svg>
            </ZoomButton>
            <ZoomButton $top={250}>
              <svg width="26" height="8" viewBox="0 0 26 8">
                <rect width="26" height="7" fill="#666" />
              </svg>
            </ZoomButton>
            <OpenButton>
              <svg width="26" height="32" viewBox="0 0 26 32">
                <path d="M13 32 C10 25 0 20 0 12 A13 12.500 0 0 1 26 12 C26 20 16 25 13 32 Z" fill="#fc3f2f" />
                <circle cx="13" cy="12" r="5" fill="#fff" />
              </svg>
              Открыть в Яндекс.Картах
            </OpenButton>
            <CreateLink>Создать свою карту</CreateLink>
            <Copyright>
              © Яндекс <span>Условия использования</span>
            </Copyright>
          </MapFrame>
          <Divider />
          <RegionTitle $top={89}>Москва</RegionTitle>
          <CardGrid>
            {moscow.map(o => (
              <Office key={o.phone} {...o} />
            ))}
          </CardGrid>
          <RegionTitle $top={90}>Московская область</RegionTitle>
          <CardGrid>
            <Office
              title="Одинцовский район, г.Голицыно"
              address="р.п. Большие Вяземы, Ямская улица 1Б"
              phone="+7 (499) 110-57-85"
            />
            <Card $closed>
              <CardTitle $closed>г. Лобня</CardTitle>
              <ClosedNote>Медцентр больше не работает</ClosedNote>
            </Card>
          </CardGrid>
        </Main>
        <Footer>© 1996 - 2021 «Гимед»</Footer>
      </Page>
    </>
  );
}
